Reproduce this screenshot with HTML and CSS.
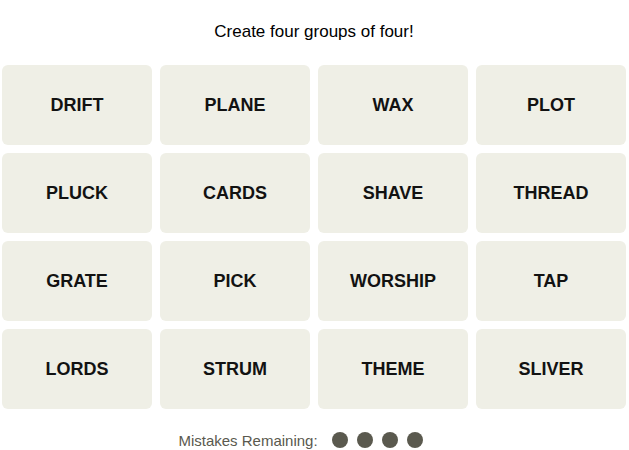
FILE: index.html
```html
<!DOCTYPE html>
<html>
<head>
  <link rel="stylesheet" href="styles.css">
</head>
<body>
  <div class="game">
    <p class="prompt">Create four groups of four!</p>

    <div class="board">
      <button class="tile">DRIFT</button>
      <button class="tile">PLANE</button>
      <button class="tile">WAX</button>
      <button class="tile">PLOT</button>
      <button class="tile">PLUCK</button>
      <button class="tile">CARDS</button>
      <button class="tile">SHAVE</button>
      <button class="tile">THREAD</button>
      <button class="tile">GRATE</button>
      <button class="tile">PICK</button>
      <button class="tile">WORSHIP</button>
      <button class="tile">TAP</button>
      <button class="tile">LORDS</button>
      <button class="tile">STRUM</button>
      <button class="tile">THEME</button>
      <button class="tile">SLIVER</button>
    </div>

    <div class="mistakes">
      <span class="mistakes-label">Mistakes Remaining:</span>
      <span class="dots">
        <span class="dot"></span>
        <span class="dot"></span>
        <span class="dot"></span>
        <span class="dot"></span>
      </span>
    </div>
  </div>
</body>
</html>
```

FILE: styles.css
```css
body {
  margin: 0;
  background: #fff;
  font-family: "Liberation Sans", Arial, sans-serif;
  color: #121212;
}

.game {
  width: 624px;
  margin: 0 2px;
  padding-top: 22px;
}

.prompt {
  margin: 0 0 23px;
  font-size: 17px;
  line-height: 20px;
  text-align: center;
  color: #000;
}

.board {
  display: grid;
  grid-template-columns: repeat(4, 150px);
  grid-auto-rows: 80px;
  gap: 8px;
}

.tile {
  border: none;
  border-radius: 6px;
  background: #efefe6;
  font-family: inherit;
  font-size: 18px;
  font-weight: bold;
  color: #121212;
  padding: 0;
}

.mistakes {
  display: flex;
  justify-content: center;
  align-items: center;
  gap: 14px;
  margin-top: 22px;
  padding-right: 27px;
  height: 18px;
}

.mistakes-label {
  font-size: 15px;
  color: #5a594e;
}

.dots {
  display: flex;
  gap: 9px;
}

.dot {
  width: 16px;
  height: 16px;
  border-radius: 50%;
  background: #5a594e;
}
```
